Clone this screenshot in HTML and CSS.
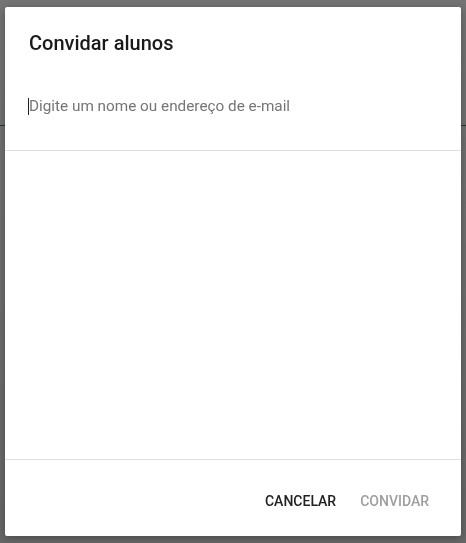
FILE: index.html
```html
<!DOCTYPE html>
<html lang="pt">
<head>
<meta charset="utf-8">
<link rel="stylesheet" href="styles.css">
</head>
<body>
<div class="page">
  <div class="page-header"></div>
</div>
<div class="scrim">
  <div class="dialog">
    <h2 class="dialog-title">Convidar alunos</h2>
    <div class="search">
      <span class="caret"></span><span class="placeholder">Digite um nome ou endereço de e-mail</span>
    </div>
    <div class="results"></div>
    <div class="actions">
      <button class="btn btn-primary">CANCELAR</button>
      <button class="btn btn-disabled">CONVIDAR</button>
    </div>
  </div>
</div>
</body>
</html>
```
FILE: styles.css
```css
html, body {
  margin: 0;
  padding: 0;
  height: 100%;
}
body {
  font-family: Roboto, "Noto Sans", Arial, sans-serif;
  background: linear-gradient(#747474, #676767);
  overflow: hidden;
}
.page {
  height: 100%;
}
.page-header {
  height: 125px;
  border-bottom: 1px solid #1f3b2b;
}
.scrim {
  position: fixed;
  inset: 0;
  padding: 7px 5px;
  box-sizing: border-box;
}
.dialog {
  width: 456px;
  height: 529px;
  background: #fff;
  border-radius: 2px;
  box-shadow: 0 2px 8px rgba(0,0,0,0.3);
  display: flex;
  flex-direction: column;
}
.dialog-title {
  margin: 0;
  padding: 24px 24px 0 24px;
  font-size: 20px;
  font-weight: 500;
  line-height: 24px;
  color: #1a1a1a;
}
.search {
  display: flex;
  align-items: center;
  height: 20px;
  padding: 41px 24px 34px 23px;
  border-bottom: 1px solid #e0e0e0;
}
.caret {
  width: 1px;
  height: 17px;
  background: #212121;
}
.placeholder {
  font-size: 15.3px;
  line-height: 20px;
  color: #757575;
}
.results {
  flex: 1;
  border-bottom: 1px solid #e0e0e0;
}
.actions {
  height: 76px;
  box-sizing: border-box;
  padding: 6px 24px 0 0;
  display: flex;
  justify-content: flex-end;
  align-items: center;
  gap: 8px;
}
.btn {
  font-family: Roboto, Arial, sans-serif;
  font-size: 14px;
  font-weight: 500;
  background: none;
  border: 0;
  padding: 0 8px;
  height: 36px;
  min-width: 64px;
}
.btn-primary {
  color: #212121;
}
.btn-disabled {
  color: #9e9e9e;
}
```
